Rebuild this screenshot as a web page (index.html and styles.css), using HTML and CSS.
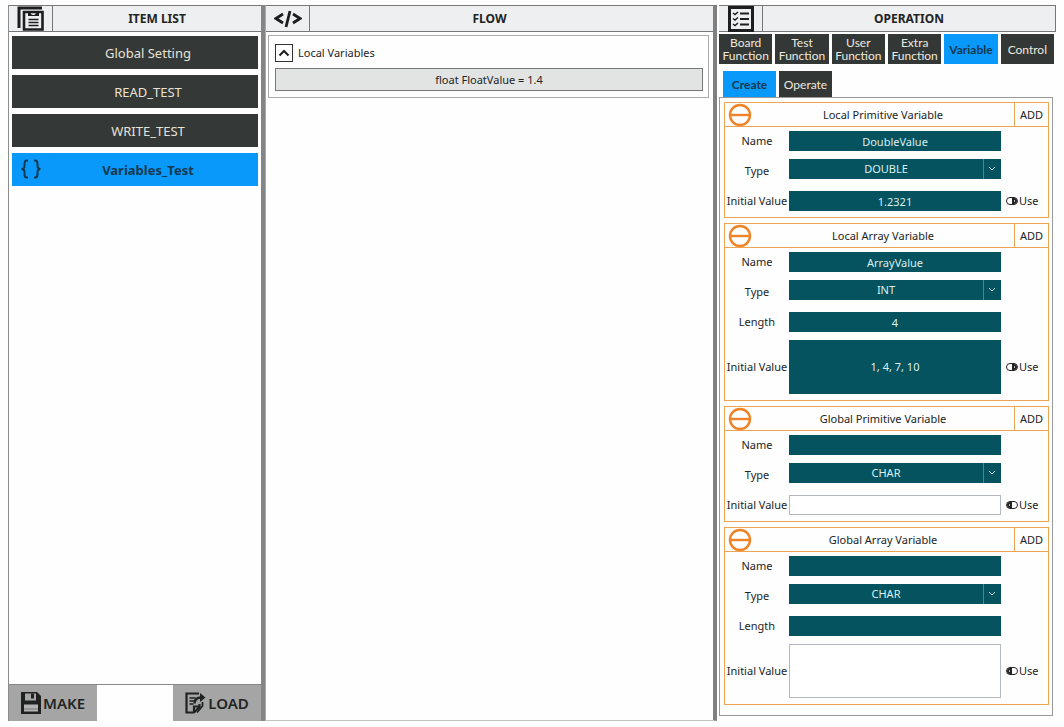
FILE: index.html
```html
<!DOCTYPE html>
<html lang="en">
<head>
<meta charset="utf-8">
<title>Test Editor</title>
<link rel="stylesheet" href="styles.css">
</head>
<body>
<main class="app">
  <section class="panel items">
    <header class="panel-head">
      <span class="head-icon">
        <svg width="28" height="25" viewBox="0 0 28 25" fill="none" stroke="#1d1f1f"><path d="M2 22V2h23" stroke-width="3"/><path d="M7 6h18.500v17.500H7z" stroke-width="2.600"/><path d="M11 6h2.500c0 2 1 3 2.800 3S19 8 19 6h3v4H11z" fill="#1d1f1f" stroke="none"/><path d="M11.500 13.500h10M11.500 16.500h10M11.500 19.500h10" stroke-width="1.300"/></svg>
      </span>
      <h2 class="head-title">ITEM LIST</h2>
    </header>
    <nav class="item-list">
      <button class="item">Global Setting</button>
      <button class="item">READ_TEST</button>
      <button class="item">WRITE_TEST</button>
      <button class="item item-active"><svg class="braces" width="22" height="20" viewBox="0 0 22 20" fill="none" stroke="#14384f" stroke-width="2"><path d="M8 1.500H6.500C4.500 1.500 4.500 3 4.500 5v2c0 2-1 3-3 3 2 0 3 1 3 3v2c0 2 0 3.500 2 3.500H8M14 1.500h1.500c2 0 2 1.500 2 3.500v2c0 2 1 3 3 3-2 0-3 1-3 3v2c0 2 0 3.500-2 3.500H14"/></svg>Variables_Test</button>
    </nav>
    <footer class="actions">
      <button class="action">
        <svg width="20" height="22" viewBox="0 0 20 22"><path d="M0 0h16l4 4v18H0z" fill="#202222"/><path d="M4 1.500h11v7H4z" fill="#a8a8a8"/><path d="M10 1.500h3v5h-3z" fill="#202222"/><path d="M3 12.500h14v7H3z" fill="#b4b4b4"/><path d="M3 17h14" stroke="#777"/></svg>MAKE</button>
      <button class="action">
        <svg width="21" height="22" viewBox="0 0 21 22" fill="none" stroke="#202222"><path d="M14 1.500H1.500v19H9l5.500-5.500v-3M9 20v-5.500h5.500" stroke-width="2.200"/><path d="M4.500 6h6M4.500 9h5M4.500 12h4" stroke-width="1.500"/><path d="M9.500 11.500c0-4 2.500-6 6.500-6" stroke-width="2.400"/><path d="M15 1l5.500 4.500L15 10z" fill="#202222" stroke="none"/><path d="M17.500 10v4L12 20.500" stroke-width="1.800"/></svg>LOAD</button>
    </footer>
  </section>

  <section class="panel flow">
    <header class="panel-head">
      <span class="head-icon">
        <svg width="28" height="18" viewBox="0 0 28 18" fill="none" stroke="#1d1f1f" stroke-width="2.800"><path d="M9 4L2 8.500 9 13M19 4l7 4.500L19 13M16 1l-4 16"/></svg>
      </span>
      <h2 class="head-title">FLOW</h2>
    </header>
    <div class="group">
      <div class="group-head">
        <button class="collapse" aria-label="Collapse local variables"><svg width="12" height="8" viewBox="0 0 12 8" fill="none" stroke="#1d1f1f" stroke-width="2"><path d="M1.500 6.500L6 2l4.500 4.500"/></svg></button>
        <span>Local Variables</span>
      </div>
      <button class="statement">float FloatValue = 1.4</button>
    </div>
  </section>

  <section class="panel operation">
    <header class="panel-head">
      <span class="head-icon">
        <svg width="26" height="26" viewBox="0 0 26 26" fill="none" stroke="#1d1f1f"><path d="M1.500 1.500h23v23h-23z" stroke-width="3"/><path d="M5 7l2 1.500L10 6M5 12.500L7 14l3-2.500M5 18l2 1.500 3-2.500" stroke-width="1.500"/><path d="M12 7.500h9M12 13h9M12 18.500h9" stroke-width="1.800"/></svg>
      </span>
      <h2 class="head-title">OPERATION</h2>
    </header>
    <nav class="tabs">
      <button class="tab">Board Function</button>
      <button class="tab">Test Function</button>
      <button class="tab">User Function</button>
      <button class="tab">Extra Function</button>
      <button class="tab tab-active">Variable</button>
      <button class="tab">Control</button>
    </nav>
    <nav class="subtabs">
      <button class="tab tab-active">Create</button>
      <button class="tab">Operate</button>
    </nav>
    <div class="cards">
      <section class="card">
        <header class="card-head">
          <svg class="minus" viewBox="0 0 24 24"><circle cx="12" cy="12" r="10"/><path d="M2 12h20"/></svg>
          <h3 class="card-title">Local Primitive Variable</h3>
          <button class="add">ADD</button>
        </header>
        <div class="card-body">
          <div class="row"><label for="lp-name">Name</label><input class="field" id="lp-name" value="DoubleValue"></div>
          <div class="row row-type"><label for="lp-type">Type</label><div class="pick"><select class="field" id="lp-type"><option>DOUBLE</option></select><svg class="chevron" viewBox="0 0 18 20"><path d="M.5 0v20" class="divider"/><path d="M6 8l3 3 3-3"/></svg></div></div>
          <div class="row"><label for="lp-init">Initial Value</label><input class="field" id="lp-init" value="1.2321"><label class="use"><input type="checkbox" class="switch" checked>Use</label></div>
        </div>
      </section>
      <section class="card">
        <header class="card-head">
          <svg class="minus" viewBox="0 0 24 24"><circle cx="12" cy="12" r="10"/><path d="M2 12h20"/></svg>
          <h3 class="card-title">Local Array Variable</h3>
          <button class="add">ADD</button>
        </header>
        <div class="card-body">
          <div class="row"><label for="la-name">Name</label><input class="field" id="la-name" value="ArrayValue"></div>
          <div class="row row-type"><label for="la-type">Type</label><div class="pick"><select class="field" id="la-type"><option>INT</option></select><svg class="chevron" viewBox="0 0 18 20"><path d="M.5 0v20" class="divider"/><path d="M6 8l3 3 3-3"/></svg></div></div>
          <div class="row"><label for="la-len">Length</label><input class="field" id="la-len" value="4"></div>
          <div class="row"><label for="la-init">Initial Value</label><textarea class="field field-tall" id="la-init">1, 4, 7, 10</textarea><label class="use"><input type="checkbox" class="switch" checked>Use</label></div>
        </div>
      </section>
      <section class="card">
        <header class="card-head">
          <svg class="minus" viewBox="0 0 24 24"><circle cx="12" cy="12" r="10"/><path d="M2 12h20"/></svg>
          <h3 class="card-title">Global Primitive Variable</h3>
          <button class="add">ADD</button>
        </header>
        <div class="card-body">
          <div class="row"><label for="gp-name">Name</label><input class="field" id="gp-name"></div>
          <div class="row row-type"><label for="gp-type">Type</label><div class="pick"><select class="field" id="gp-type"><option>CHAR</option></select><svg class="chevron" viewBox="0 0 18 20"><path d="M.5 0v20" class="divider"/><path d="M6 8l3 3 3-3"/></svg></div></div>
          <div class="row"><label for="gp-init">Initial Value</label><input class="field field-off" id="gp-init"><label class="use"><input type="checkbox" class="switch">Use</label></div>
        </div>
      </section>
      <section class="card">
        <header class="card-head">
          <svg class="minus" viewBox="0 0 24 24"><circle cx="12" cy="12" r="10"/><path d="M2 12h20"/></svg>
          <h3 class="card-title">Global Array Variable</h3>
          <button class="add">ADD</button>
        </header>
        <div class="card-body">
          <div class="row"><label for="ga-name">Name</label><input class="field" id="ga-name"></div>
          <div class="row row-type"><label for="ga-type">Type</label><div class="pick"><select class="field" id="ga-type"><option>CHAR</option></select><svg class="chevron" viewBox="0 0 18 20"><path d="M.5 0v20" class="divider"/><path d="M6 8l3 3 3-3"/></svg></div></div>
          <div class="row"><label for="ga-len">Length</label><input class="field" id="ga-len"></div>
          <div class="row"><label for="ga-init">Initial Value</label><textarea class="field field-tall field-off" id="ga-init"></textarea><label class="use"><input type="checkbox" class="switch">Use</label></div>
        </div>
      </section>
    </div>
  </section>
</main>
</body>
</html>
```

FILE: styles.css
```css
* { box-sizing: border-box; }

body {
  margin: 0;
  background: #fefefe;
  color: #222424;
  font: 11px/16px "Noto Sans", "Open Sans", sans-serif;
}

button, input, select, textarea {
  margin: 0;
  padding: 0;
  border: 0;
  border-radius: 0;
  color: inherit;
  font: inherit;
}

.app {
  display: grid;
  grid-template-columns: 257fr 452fr 339fr;
  min-height: 100vh;
  padding: 5px 8px 6px;
}

.panel {
  display: flex;
  flex-direction: column;
  min-width: 0;
}

.items {
  border-left: 1px solid #8c8c8c;
  border-right: 4px solid #858585;
}

.flow {
  border-left: 1px solid #aaa;
  border-right: 4px solid #808080;
  border-bottom: 1px solid #c4c4c4;
}

.panel-head {
  display: flex;
  height: 27px;
  border: 1px solid #777;
  border-left: 0;
  background: #eeeff0;
}

.items .panel-head, .flow .panel-head { border-right: 0; }

.head-icon {
  display: flex;
  align-items: center;
  justify-content: center;
  width: 44px;
  border-right: 1px solid #777;
}

.head-title {
  flex: 1;
  margin: 0;
  font-size: 12px;
  line-height: 26px;
  text-align: center;
}

.flow .head-title { padding-right: 44px; }

.item-list {
  display: flex;
  flex: 1;
  flex-direction: column;
  gap: 6px;
  padding: 4px 3px 0 3px;
}

.item {
  position: relative;
  height: 33px;
  padding-left: 26px;
  background: #343837;
  color: #e8e2d6;
  font-size: 13px;
}

.item-active {
  background: #0899fa;
  color: #14384f;
  font-weight: 700;
}

.braces {
  position: absolute;
  top: 6px;
  left: 8px;
}

.actions {
  display: flex;
  justify-content: space-between;
  border-top: 1px solid #888;
}

.action {
  display: flex;
  align-items: center;
  justify-content: center;
  gap: 2px;
  width: 88px;
  height: 36px;
  background: #a5a5a5;
  font-size: 15px;
  font-weight: 600;
}

.group {
  margin: 3px 4px 0 2px;
  padding: 8px 5px 6px 6px;
  border: 1px solid #aaa;
}

.group-head {
  display: flex;
  align-items: center;
  gap: 5px;
}

.collapse {
  display: flex;
  align-items: center;
  justify-content: center;
  width: 18px;
  height: 18px;
  border: 1px solid #333;
  background: #fff;
}

.statement {
  display: block;
  width: 100%;
  height: 23px;
  margin-top: 6px;
  border: 1px solid #777;
  background: #e2e4e4;
}

.operation .panel-head { margin-left: 2px; }

.tabs {
  display: grid;
  grid-template-columns: repeat(6, 1fr);
  gap: 3px;
  padding: 2px 2px 0 2px;
}

.tab {
  height: 30px;
  background: #333736;
  color: #eee9df;
  font: 12px/13px Lato, "Noto Sans", sans-serif;
}

.tab-active {
  background: #0899fa;
  color: #14384f;
  font-weight: 700;
}

.subtabs {
  display: flex;
  gap: 3px;
  padding: 7px 0 0 6px;
}

.subtabs .tab {
  width: 53px;
  height: 26px;
}

.cards {
  display: flex;
  flex-direction: column;
  gap: 5px;
  margin: 0 3px 0 2px;
  padding: 4px 3px 10px 4px;
  border: 1px solid #999;
}

.card { border: 1px solid #eba552; }

.card-head {
  display: flex;
  height: 24px;
  border-bottom: 1px solid #eba552;
}

.minus {
  width: 24px;
  height: 24px;
  margin-left: 3px;
  fill: none;
  stroke: #ee8427;
  stroke-width: 2.4;
}

.card-title {
  flex: 1;
  margin: 0;
  font-size: 11px;
  font-weight: 400;
  line-height: 24px;
  text-align: center;
}

.add {
  width: 34px;
  border-left: 1px solid #eba552;
  background: transparent;
}

.card-body {
  display: flex;
  flex-direction: column;
  gap: 8px;
  padding: 4px 0 6px;
}

.row {
  display: grid;
  grid-template-columns: 64px 1fr 47px;
  align-items: center;
}

.row > label {
  text-align: center;
  white-space: nowrap;
}

.row-type {
  height: 24px;
}

.field {
  display: block;
  width: 100%;
  min-width: 0;
  height: 20px;
  background: #05535f;
  color: #dceeee;
  text-align: center;
}

.pick {
  position: relative;
  align-self: start;
}

select.field {
  padding-right: 18px;
  appearance: none;
  text-align-last: center;
}

.chevron {
  position: absolute;
  top: 0;
  right: 0;
  width: 18px;
  height: 20px;
  fill: none;
  stroke: #c4dcde;
  pointer-events: none;
}

.divider { stroke: #4f868d; }

.field-tall {
  height: 54px;
  padding-top: 19px;
  resize: none;
}

.field-off {
  border: 1px solid #b4b8c0;
  background: #fff;
  color: #222424;
}

.use {
  display: flex;
  align-items: center;
  gap: 1px;
  padding-left: 5px;
}

.switch {
  display: flex;
  width: 12px;
  height: 8px;
  border: 1px solid #222;
  border-radius: 4px;
  appearance: none;
  background: #fff;
}

.switch::before {
  box-sizing: border-box;
  width: 5px;
  border: 2px solid #222;
  border-radius: 3px 0 0 3px;
  background: #fff;
  content: "";
}

.switch:checked { justify-content: flex-end; }

.switch:checked::before { border-radius: 0 3px 3px 0; }
```
